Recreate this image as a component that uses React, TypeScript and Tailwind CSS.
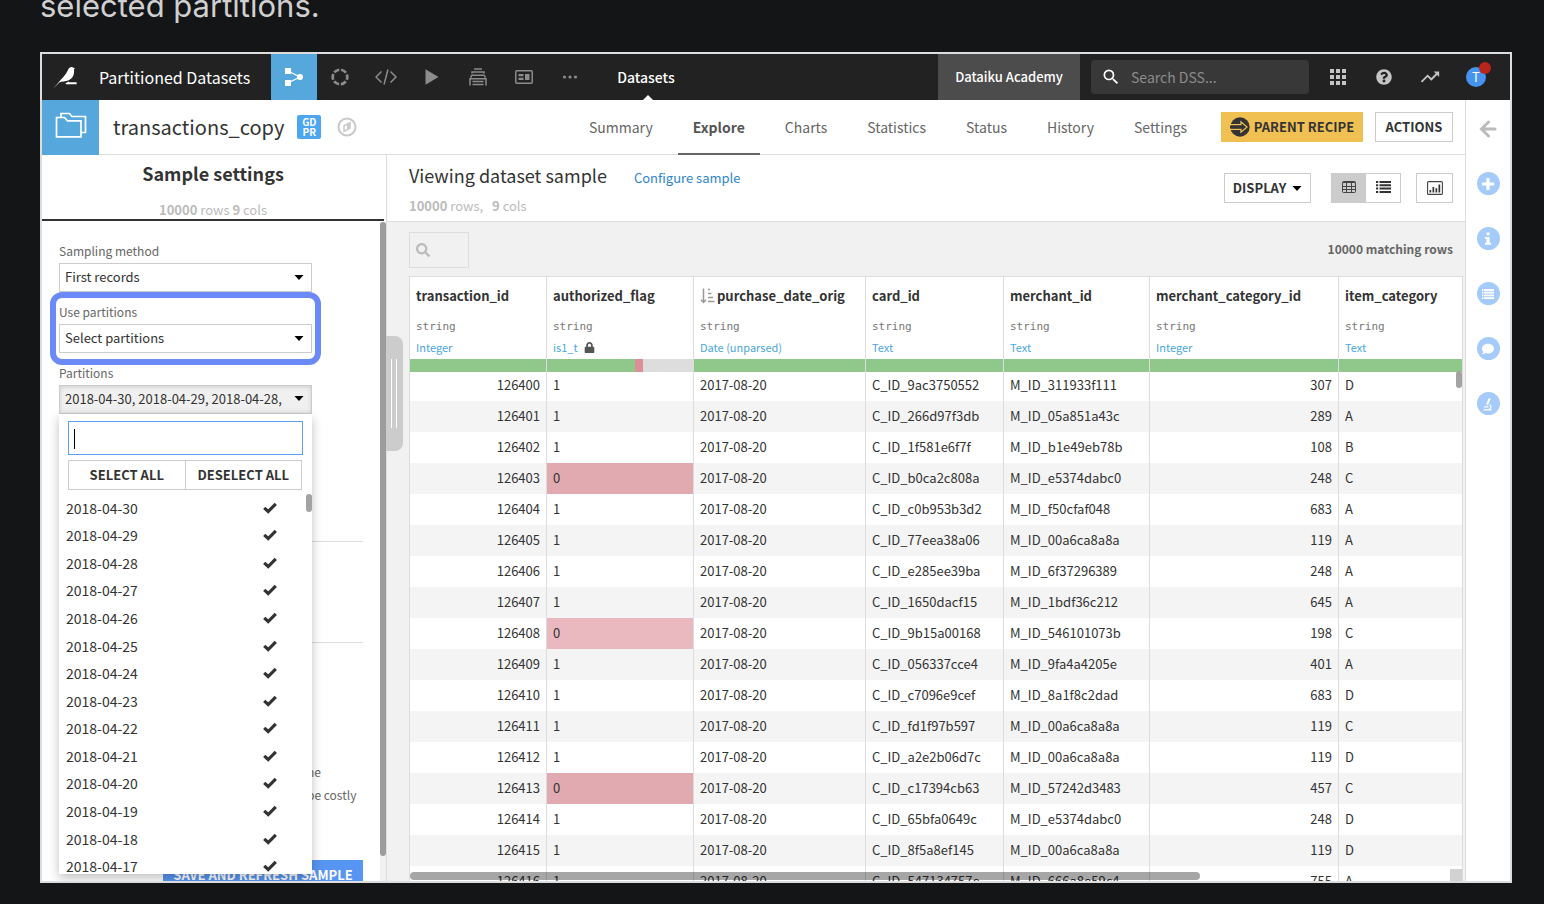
import type { ReactNode } from "react";
import { FaComment, FaLock, FaQuestionCircle, FaSearch } from "react-icons/fa";
import { MdSearch, MdTrendingUp } from "react-icons/md";

const partitions = [
  "2018-04-30", "2018-04-29", "2018-04-28", "2018-04-27", "2018-04-26", "2018-04-25", "2018-04-24",
  "2018-04-23", "2018-04-22", "2018-04-21", "2018-04-20", "2018-04-19", "2018-04-18", "2018-04-17",
];

type Row = [string, string, string, string, string, string];

const rows: Row[] = [
  ["126400", "1", "C_ID_9ac3750552", "M_ID_311933f111", "307", "D"],
  ["126401", "1", "C_ID_266d97f3db", "M_ID_05a851a43c", "289", "A"],
  ["126402", "1", "C_ID_1f581e6f7f", "M_ID_b1e49eb78b", "108", "B"],
  ["126403", "0", "C_ID_b0ca2c808a", "M_ID_e5374dabc0", "248", "C"],
  ["126404", "1", "C_ID_c0b953b3d2", "M_ID_f50cfaf048", "683", "A"],
  ["126405", "1", "C_ID_77eea38a06", "M_ID_00a6ca8a8a", "119", "A"],
  ["126406", "1", "C_ID_e285ee39ba", "M_ID_6f37296389", "248", "A"],
  ["126407", "1", "C_ID_1650dacf15", "M_ID_1bdf36c212", "645", "A"],
  ["126408", "0", "C_ID_9b15a00168", "M_ID_546101073b", "198", "C"],
  ["126409", "1", "C_ID_056337cce4", "M_ID_9fa4a4205e", "401", "A"],
  ["126410", "1", "C_ID_c7096e9cef", "M_ID_8a1f8c2dad", "683", "D"],
  ["126411", "1", "C_ID_fd1f97b597", "M_ID_00a6ca8a8a", "119", "C"],
  ["126412", "1", "C_ID_a2e2b06d7c", "M_ID_00a6ca8a8a", "119", "D"],
  ["126413", "0", "C_ID_c17394cb63", "M_ID_57242d3483", "457", "C"],
  ["126414", "1", "C_ID_65bfa0649c", "M_ID_e5374dabc0", "248", "D"],
  ["126415", "1", "C_ID_8f5a8ef145", "M_ID_00a6ca8a8a", "119", "D"],
  ["126416", "1", "C_ID_547134757e", "M_ID_666a8e59c4", "755", "A"],
];

const columns = [
  { name: "transaction_id", meaning: "Integer" },
  { name: "authorized_flag", meaning: "is1_t" },
  { name: "purchase_date_orig", meaning: "Date (unparsed)" },
  { name: "card_id", meaning: "Text" },
  { name: "merchant_id", meaning: "Text" },
  { name: "merchant_category_id", meaning: "Integer" },
  { name: "item_category", meaning: "Text" },
];

const tabs = ["Summary", "Explore", "Charts", "Statistics", "Status", "History", "Settings"];

function BirdLogo() {
  return (
    <svg viewBox="0 0 24 24" className="size-6" fill="#fff" aria-hidden="true">
      <path d="M.3 23.6 8 14.600C11 11.500 13.600 8.400 15.200 4.600 16 2.600 17.800 1.700 19.500 2.200L22 3.600 20.900 4.400C21.700 8.300 20.200 12.800 15.800 15.300 12.500 16.900 8.500 16 6.300 17.600Z" />
      <path d="M12.500 18.200 16 16.600V17.300H23.600V19.200H13Z" />
    </svg>
  );
}

function FlowIcon() {
  return (
    <svg viewBox="0 0 18 18" className="size-[18px]" aria-hidden="true">
      <path d="M3 3 15 9 3 15" fill="none" stroke="#fff" strokeWidth="1.200" />
      <path d="M0 0H6V6H0ZM0 12H6V18H0Z" fill="#fff" />
      <circle cx="15" cy="9" r="3" fill="#fff" />
    </svg>
  );
}

function RingIcon() {
  return (
    <svg viewBox="0 0 18 18" className="size-[18px]" aria-hidden="true">
      <circle cx="9" cy="9" r="7.300" fill="none" stroke="#8c8c8c" strokeWidth="2.700" strokeDasharray="5.800 1.845" strokeDashoffset="2.900" />
    </svg>
  );
}

function CodeIcon() {
  return (
    <svg viewBox="0 0 22 16" className="h-4 w-[22px]" fill="none" stroke="#8c8c8c" strokeWidth="1.500" aria-hidden="true">
      <path d="M6.500 2.500 1 8 6.500 13.500M15.500 2.500 21 8 15.500 13.500M13 .5 9 15.500" />
    </svg>
  );
}

function PlayIcon() {
  return (
    <svg viewBox="0 0 14 16" className="h-4 w-3.5" fill="#8c8c8c" aria-hidden="true">
      <path d="M.5 .3 13.500 8 .5 15.700Z" />
    </svg>
  );
}

function StackIcon() {
  return (
    <svg viewBox="0 0 18 18" className="size-[18px]" fill="none" stroke="#8c8c8c" strokeWidth="1.500" aria-hidden="true">
      <path d="M5 .9H13M3 5.500V4H15V5.500M1.500 9.500 3 7.200H15L16.500 9.500M1 17.500V10.700H17V17.500M3.500 13.500H14.500M3.500 16.500H14.500" />
    </svg>
  );
}

function BoardIcon() {
  return (
    <svg viewBox="0 0 18 14" className="h-[14px] w-[18px]" fill="#8c8c8c" aria-hidden="true">
      <rect x=".8" y=".8" width="16.400" height="12.400" rx="1" fill="none" stroke="#8c8c8c" strokeWidth="1.500" />
      <path d="M3.500 4H8.500V6.200H3.500ZM3.500 7.800H8.500V10H3.500ZM10 4H14.500V10H10Z" />
    </svg>
  );
}

function DotsIcon() {
  return (
    <svg viewBox="0 0 16 4" className="h-1 w-4" fill="#8c8c8c" aria-hidden="true">
      <circle cx="2.500" cy="2" r="1.600" />
      <circle cx="8" cy="2" r="1.600" />
      <circle cx="13.500" cy="2" r="1.600" />
    </svg>
  );
}

function GridIcon() {
  return (
    <svg viewBox="0 0 16 16" className="size-4" fill="#c4c4c4" aria-hidden="true">
      <path d="M0 0H4V4H0ZM6 0H10V4H6ZM12 0H16V4H12ZM0 6H4V10H0ZM6 6H10V10H6ZM12 6H16V10H12ZM0 12H4V16H0ZM6 12H10V16H6ZM12 12H16V16H12Z" />
    </svg>
  );
}

function FoldersIcon() {
  return (
    <svg viewBox="0 0 32 26" className="h-[26px] w-8" fill="none" stroke="#fff" strokeWidth="1.700" aria-hidden="true">
      <path d="M1.500 24.800V5.500H9.500L12.500 8.800H26V24.800Z" />
      <path d="M6 5.500V1.500H14.500L17 4.500H30.500V20.500H26" />
    </svg>
  );
}

function CompassIcon() {
  return (
    <svg viewBox="0 0 20 20" className="size-5" fill="none" stroke="#c8c8c8" aria-hidden="true">
      <circle cx="10" cy="10" r="8.500" strokeWidth="2" />
      <path d="M13 5.800V11.200L7 14.200V8.800Z" strokeWidth="1.500" />
      <path d="M10 8.500 12.500 6.500V11L10 12Z" fill="#c8c8c8" stroke="none" />
    </svg>
  );
}

function ParentIcon() {
  return (
    <svg viewBox="0 0 20 20" className="size-5" aria-hidden="true">
      <circle cx="10" cy="10" r="9.700" fill="#333" />
      <path d="M0 7.600H11V4.800L17 10 11 15.200V12.400H0" fill="none" stroke="#f0c053" strokeWidth="1.300" />
      <path d="M0 8.800H12V7L15.500 10 12 13V11.200H0Z" fill="#333" />
    </svg>
  );
}

function TableIcon() {
  return (
    <svg viewBox="0 0 14 12" className="h-3 w-[14px]" fill="none" stroke="#444" aria-hidden="true">
      <rect x=".5" y=".5" width="13" height="11" rx="1" />
      <path d="M1 1.500H13M1 5.500H13M1 8.500H13M4.500 1V11M9.500 1V11" />
    </svg>
  );
}

function ListIcon() {
  return (
    <svg viewBox="0 0 15 12" className="h-3 w-[15px]" fill="none" stroke="#333" strokeWidth="2" aria-hidden="true">
      <path d="M0 1H2.200M3.500 1H15M0 4.300H2.200M3.500 4.300H15M0 7.600H2.200M3.500 7.600H15M0 10.900H2.200M3.500 10.900H15" />
    </svg>
  );
}

function ChartIcon() {
  return (
    <svg viewBox="0 0 16 14" className="h-[14px] w-4" aria-hidden="true">
      <rect x=".6" y=".6" width="14.800" height="12.800" rx="1" fill="none" stroke="#444" strokeWidth="1.100" />
      <path d="M2.500 9H4.200V11.500H2.500ZM5.500 6H7.200V11.500H5.500ZM8.500 7.200H10.200V11.500H8.500ZM11.500 3.500H13.200V11.500H11.500Z" fill="#333" />
    </svg>
  );
}

function SortIcon() {
  return (
    <svg viewBox="0 0 15 16" className="h-4 w-[15px] shrink-0" fill="none" stroke="#999" strokeWidth="1.500" aria-hidden="true">
      <path d="M3.500 .5V14M1 11.800 3.500 14.500 6 11.800M8 1.500H10M8 5.500H11.500M8 9.500H13M8 13.500H14.500" />
    </svg>
  );
}

function CheckIcon() {
  return (
    <svg viewBox="0 0 14 12" className="h-3 w-[14px]" fill="none" stroke="#333" strokeWidth="3.200" aria-hidden="true">
      <path d="M1.200 5.800 5.200 9.500 12.800 1.800" />
    </svg>
  );
}

function BackIcon() {
  return (
    <svg viewBox="0 0 18 18" className="size-[18px]" fill="none" stroke="#bbb" strokeWidth="3" strokeLinecap="round" aria-hidden="true">
      <path d="M9.500 2 2.500 9 9.500 16M3.500 9H16" />
    </svg>
  );
}

function PlusIcon() {
  return (
    <svg viewBox="0 0 12 12" className="size-3" fill="none" stroke="#fff" strokeWidth="3.200" aria-hidden="true">
      <path d="M6 0V12M0 6H12" />
    </svg>
  );
}

function InfoIcon() {
  return (
    <svg viewBox="0 0 8 13" className="h-[13px] w-2" fill="#fff" aria-hidden="true">
      <path d="M2.500 .5H5.500V3.300H2.500ZM1 5H5.600V10.800H7V12.800H1V10.800H2.500V7H1Z" />
    </svg>
  );
}

function RowsIcon() {
  return (
    <svg viewBox="0 0 12 10" className="h-[10px] w-3" fill="none" stroke="#fff" strokeWidth="1.800" aria-hidden="true">
      <path d="M0 1H1.400M2 1H12M0 3.700H1.400M2 3.700H12M0 6.400H1.400M2 6.400H12M0 9.100H1.400M2 9.100H12" />
    </svg>
  );
}

function MicroscopeIcon() {
  return (
    <svg viewBox="0 0 12 14" className="h-[14px] w-3" fill="none" stroke="#fff" strokeWidth="1.200" aria-hidden="true">
      <path d="M1.500 12.800H9.500M7 12.500C9.500 11.500 9.500 8.500 7.500 7.500M2 9.800H6.500" />
      <path d="M6.800 1 8.600 1.800 6 8 4.200 7.200Z" fill="#fff" stroke="none" />
    </svg>
  );
}

function Caret() {
  return (
    <svg viewBox="0 0 10 5" className="h-[5px] w-[10px] shrink-0" aria-hidden="true">
      <path d="M.5 0H9.500L5 5Z" fill="#000" />
    </svg>
  );
}

function BarButton({ label, children }: { label: string; children: ReactNode }) {
  return (
    <button aria-label={label} className="flex w-[46px] shrink-0 items-center justify-center">
      {children}
    </button>
  );
}

function RailButton({ label, children }: { label: string; children: ReactNode }) {
  return (
    <button aria-label={label} className="flex size-[23px] items-center justify-center rounded-full bg-[#a5cbfb] text-white">
      {children}
    </button>
  );
}

function SelectField({ id, label, value }: { id: string; label: string; value: string }) {
  return (
    <div>
      <label htmlFor={id} className="block text-xs leading-5 text-[#666]">{label}</label>
      <div className="relative mt-0.5">
        <select id={id} className="block h-[29px] w-full appearance-none border border-[#ccc] bg-white px-[5px] pb-0.5 text-[13px] leading-5 text-[#333]">
          <option>{value}</option>
        </select>
        <span className="pointer-events-none absolute inset-y-0 right-2 flex items-center"><Caret /></span>
      </div>
    </div>
  );
}

function TopBar() {
  return (
    <header className="flex h-[46px] shrink-0 items-stretch bg-[#222]">
      <a href="#home" aria-label="Home" className="flex w-[57px] shrink-0 items-center pl-[11px]"><BirdLogo /></a>
      <a href="#project" className="mr-[21px] flex shrink-0 items-center text-base text-white">Partitioned Datasets</a>
      <nav className="flex shrink-0" aria-label="Project">
        <button aria-label="Flow" className="flex w-[46px] items-center justify-center bg-[#56a7db]"><FlowIcon /></button>
        <BarButton label="Lab"><RingIcon /></BarButton>
        <BarButton label="Code"><CodeIcon /></BarButton>
        <BarButton label="Jobs"><PlayIcon /></BarButton>
        <BarButton label="Deploy"><StackIcon /></BarButton>
        <BarButton label="Dashboards"><BoardIcon /></BarButton>
        <BarButton label="More"><DotsIcon /></BarButton>
      </nav>
      <a href="#datasets" className="relative ml-6 flex items-center text-sm font-medium text-white">
        Datasets
        <span className="absolute bottom-0 left-1/2 -ml-[3px] border-x-[5px] border-b-[5px] border-x-transparent border-b-white" />
      </a>
      <div className="ml-auto flex items-stretch">
        <a href="#academy" className="mr-[11px] flex w-[142px] items-center justify-center bg-[#4c4c4c] text-[13px] font-medium text-white">Dataiku Academy</a>
        <label className="my-1.5 flex w-[218px] items-center rounded bg-[#383838] pl-2.5">
          <MdSearch className="size-5 text-white" />
          <input aria-label="Search DSS" placeholder="Search DSS..." className="ml-2.5 w-40 bg-transparent text-sm text-white placeholder:text-[#8c8c8c]" />
        </label>
        <div className="mr-[11px] ml-1.5 flex">
          <BarButton label="Applications"><GridIcon /></BarButton>
          <BarButton label="Help"><FaQuestionCircle className="size-4 text-[#c4c4c4]" /></BarButton>
          <BarButton label="Activity"><MdTrendingUp className="size-[22px] text-[#c4c4c4]" /></BarButton>
          <BarButton label="Profile">
            <span className="relative flex size-5 items-center justify-center rounded-full bg-[#4794f0] text-[13px] text-white">
              T
              <span className="absolute -top-[5px] -right-[5px] size-3 rounded-full bg-[#b8261b]" />
            </span>
          </BarButton>
        </div>
      </div>
    </header>
  );
}

function TitleRow() {
  return (
    <div className="flex h-[55px] shrink-0 items-center border-b border-[#ddd] bg-white">
      <div className="-mb-px flex w-[57px] shrink-0 items-center justify-center self-stretch bg-[#56a7db] pb-1.5"><FoldersIcon /></div>
      <h1 className="ml-3.5 text-xl text-[#333]">transactions_copy</h1>
      <span className="ml-[13px] flex size-6 items-center justify-center rounded-xs bg-[#4ca6f0] text-center text-[10px] leading-[10px] font-bold text-white">
        GD
        <br />
        PR
      </span>
      <button aria-label="Explore flow" className="ml-4"><CompassIcon /></button>
      <nav className="ml-auto flex self-stretch" aria-label="Dataset">
        {tabs.map((tab) => (
          <a
            key={tab}
            href={`#${tab.toLowerCase()}`}
            className={
              tab === "Explore"
                ? "mx-[5px] -mb-px flex items-center border-b-2 border-[#666] px-[15px] text-sm font-bold text-[#555]"
                : "mx-[5px] -mb-px flex items-center border-b-2 border-transparent px-[15px] text-sm text-[#666]"
            }
          >
            {tab}
          </a>
        ))}
      </nav>
      <button className="ml-3.5 flex h-[30px] w-[142px] items-center justify-center gap-1 bg-[#f0c053] text-[13px] font-bold text-[#333]">
        <ParentIcon />
        PARENT RECIPE
      </button>
      <button className="mx-3 h-[30px] w-[78px] border border-[#ccc] text-[13px] font-bold text-[#333]">ACTIONS</button>
    </div>
  );
}

function PartitionPicker() {
  return (
    <div className="relative">
      <label htmlFor="partitions" className="block text-xs leading-5 text-[#666]">Partitions</label>
      <button
        id="partitions"
        className="mt-0.5 flex h-[29px] w-full items-center justify-between border border-[#ccc] bg-[#f0f0f0] pr-[7px] pb-0.5 pl-[5px] text-[13px] whitespace-nowrap text-[#333] shadow-[inset_0_1px_4px_rgba(0,0,0,0.15)]"
      >
        2018-04-30, 2018-04-29, 2018-04-28,
        <Caret />
      </button>
      <div className="absolute top-full left-0 h-[460px] w-full overflow-hidden bg-white px-[9px] pt-[7px] shadow-[0_4px_10px_rgba(0,0,0,0.25)]">
        <div className="relative">
          <input aria-label="Filter partitions" className="block h-[34px] w-full border border-[#5c9df5] px-1.5 text-sm" />
          <span className="absolute top-2 left-1.5 h-5 w-px bg-black" />
        </div>
        <div className="mt-[5px] mr-px flex h-[30px] border border-[#ccc] text-[13px] font-bold text-[#333]">
          <button className="flex-1 border-r border-[#ccc]">SELECT ALL</button>
          <button className="flex-1">DESELECT ALL</button>
        </div>
        <ul className="-mx-[2px] mt-1 grid h-[386px] auto-rows-fr text-sm leading-5 text-[#333]">
          {partitions.map((date) => (
            <li key={date} className="flex items-center justify-between pr-7">
              {date}
              <CheckIcon />
            </li>
          ))}
        </ul>
        <span className="absolute top-20 right-0 h-[18px] w-1.5 rounded-full bg-[#a3a3a3]" />
      </div>
    </div>
  );
}

function SamplePanel() {
  return (
    <aside className="relative flex w-[345px] shrink-0 flex-col border-r border-[#ddd] bg-white">
      <div className="mr-0.5 flex h-[66px] shrink-0 flex-col items-center border-b-2 border-[#333]">
        <h2 className="mt-1.5 text-lg leading-6 font-bold text-[#333]">Sample settings</h2>
        <p className="mt-[15px] text-[13px] leading-5 text-[#bbb]"><b>10000</b> rows <b>9</b> cols</p>
      </div>
      <div className="min-h-0 flex-1 overflow-hidden pt-5 pr-[23px] pl-[17px]">
        <div className="relative z-10 flex w-[253px] flex-col gap-2.5">
          <SelectField id="method" label="Sampling method" value="First records" />
          <div className="relative">
            <SelectField id="use" label="Use partitions" value="Select partitions" />
            <span className="pointer-events-none absolute -inset-x-[9px] -top-2.5 -bottom-3 rounded-xl border-6 border-[#6b8af8]" />
          </div>
          <PartitionPicker />
        </div>
        <hr className="mt-[127px] border-[#ddd]" />
        <hr className="mt-[100px] border-[#ddd]" />
        <div className="mt-[117px] ml-[248px] text-xs leading-[23px] whitespace-nowrap text-[#666]">
          <p>he</p>
          <p>be costly</p>
        </div>
        <button className="mt-[54px] ml-auto block h-[30px] w-[200px] bg-[#5795f2] pb-px text-[13px] font-bold text-white">
          SAVE AND REFRESH SAMPLE
        </button>
      </div>
      <span className="absolute top-[67px] right-0 bottom-0 w-1.5 bg-[#f1f1f1]">
        <span className="absolute inset-x-0 top-0 bottom-[25px] rounded-full bg-[#9c9c9c]" />
      </span>
      <span className="absolute top-[181px] left-full flex h-[115px] w-[17px] gap-1 rounded-r-lg bg-[#ccc] py-[23px] pl-[5px]">
        <span className="w-px bg-white" />
        <span className="w-px bg-white" />
      </span>
    </aside>
  );
}

function DataTable() {
  return (
    <div className="relative mr-0.5 ml-[22px] min-h-0 flex-1 overflow-hidden border-t border-r border-[#ddd] bg-white">
      <table className="w-full table-fixed border-separate border-spacing-0 text-[13px] leading-5 text-[#333]">
        <colgroup>
          <col className="w-[137px]" />
          <col className="w-[147px]" />
          <col className="w-[172px]" />
          <col className="w-[138px]" />
          <col className="w-[146px]" />
          <col className="w-[189px]" />
          <col />
        </colgroup>
        <thead>
          <tr>
            {columns.map((column, index) => (
              <th key={column.name} scope="col" className="border-l border-[#ddd] p-0 text-left font-normal whitespace-nowrap">
                <div className="mt-[9px] flex items-center gap-0.5 pl-1.5 font-bold">
                  {index === 2 && <SortIcon />}
                  {column.name}
                </div>
                <div className="mt-[11px] pl-1.5 font-['DejaVu_Sans_Mono',monospace] text-[11px] text-[#777]">string</div>
                <div className="flex h-[22px] items-center gap-1.5 pb-0.5 pl-1.5 text-[11px] text-[#4aa6dc]">
                  {column.meaning}
                  {index === 1 && <FaLock className="size-[11px] text-[#555]" />}
                </div>
                <div className="relative -mb-0.5 flex h-[13px] bg-[#ddd]">
                  <span className={index === 1 ? "w-3/5 bg-[#90c78a]" : "w-full bg-[#90c78a]"} />
                  {index === 1 && <span className="w-2 bg-[#dc8f97]" />}
                </div>
              </th>
            ))}
          </tr>
        </thead>
        <tbody>
          {rows.map(([id, flag, card, merchant, category, item]) => (
            <tr key={id} className="h-[31px] even:bg-[#f4f4f4] [&>td]:border-l [&>td]:border-[#ddd] [&>td]:px-1.5 [&>td]:pt-0 [&>td]:pb-0.5">
              <td className="text-right">{id}</td>
              <td className={flag === "0" ? (id === "126408" ? "bg-[#e9b9bf]" : "bg-[#e1aab0]") : ""}>{flag}</td>
              <td>2017-08-20</td>
              <td>{card}</td>
              <td>{merchant}</td>
              <td className="text-right">{category}</td>
              <td>{item}</td>
            </tr>
          ))}
        </tbody>
      </table>
      <span className="absolute top-[94px] right-0 h-[17px] w-1.5 rounded-full bg-[#a3a3a3]" />
      <span className="absolute bottom-px left-px h-2 w-3/4 rounded-full bg-black/35" />
      <span className="absolute right-0 bottom-0 size-3 bg-[#d2d2d2]" />
    </div>
  );
}

function Explore() {
  return (
    <main className="flex min-w-0 flex-1 flex-col bg-[#f1f1f1]">
      <div className="flex h-[67px] shrink-0 items-center border-b border-[#ddd] bg-white pr-3 pl-[22px]">
        <div className="self-start">
          <div className="mt-[7px] flex items-center gap-[27px]">
            <h2 className="text-lg leading-6 text-[#333]">Viewing dataset sample</h2>
            <a href="#configure" className="pt-1.5 text-[13px] leading-5 text-[#2e84cc]">Configure sample</a>
          </div>
          <p className="mt-2 text-[13px] leading-5 text-[#bbb]"><b>10000</b> rows, <b className="ml-1.5">9</b> cols</p>
        </div>
        <div className="ml-auto flex h-[30px] items-stretch">
          <button className="flex w-[87px] items-center justify-center gap-1.5 border border-[#ccc] text-[13px] font-bold text-[#333]">
            DISPLAY
            <Caret />
          </button>
          <div className="ml-5 flex border border-[#ccc]">
            <button aria-label="Table view" className="flex w-[34px] items-center justify-center bg-[#ccc] pb-0.5"><TableIcon /></button>
            <button aria-label="List view" className="flex w-[34px] items-center justify-center pb-0.5"><ListIcon /></button>
          </div>
          <button aria-label="Statistics" className="ml-[15px] flex w-[37px] items-center justify-center border border-[#ccc]"><ChartIcon /></button>
        </div>
      </div>
      <div className="flex shrink-0 items-center justify-between pt-2.5 pr-3 pb-2 pl-[22px]">
        <label className="flex h-9 w-[60px] items-center border border-[#ddd] pl-1.5">
          <FaSearch className="size-[14px] shrink-0 text-[#bbb]" />
          <input aria-label="Search rows" className="w-8 bg-transparent text-[13px]" />
        </label>
        <span className="pb-0.5 text-xs font-bold text-[#666]">10000 matching rows</span>
      </div>
      <DataTable />
    </main>
  );
}

function Rail() {
  return (
    <aside className="flex w-[45px] shrink-0 flex-col items-center gap-8 border-l border-[#ddd] bg-white pt-[17px]">
      <button aria-label="Collapse" className="flex size-[23px] items-center justify-center"><BackIcon /></button>
      <RailButton label="Add"><PlusIcon /></RailButton>
      <RailButton label="Details"><InfoIcon /></RailButton>
      <RailButton label="Schema"><RowsIcon /></RailButton>
      <RailButton label="Discussions"><FaComment className="size-3" /></RailButton>
      <RailButton label="Lab"><MicroscopeIcon /></RailButton>
    </aside>
  );
}

export default function App() {
  return (
    <div className="flex h-screen flex-col overflow-hidden bg-[#141517] pr-8 pb-[21px] pl-10">
      <p className="flex h-[52px] shrink-0 items-end pb-7 font-[Inter,sans-serif] text-[31px] leading-9 text-[#d0d0d0]">
        selected partitions.
      </p>
      <div className="flex min-h-0 flex-1 flex-col overflow-hidden border-2 border-[#ddd] font-['Noto_Sans_CJK_SC',sans-serif]">
        <TopBar />
        <div className="flex min-h-0 flex-1">
          <div className="flex min-w-0 flex-1 flex-col">
            <TitleRow />
            <div className="flex min-h-0 flex-1">
              <SamplePanel />
              <Explore />
            </div>
          </div>
          <Rail />
        </div>
      </div>
    </div>
  );
}
